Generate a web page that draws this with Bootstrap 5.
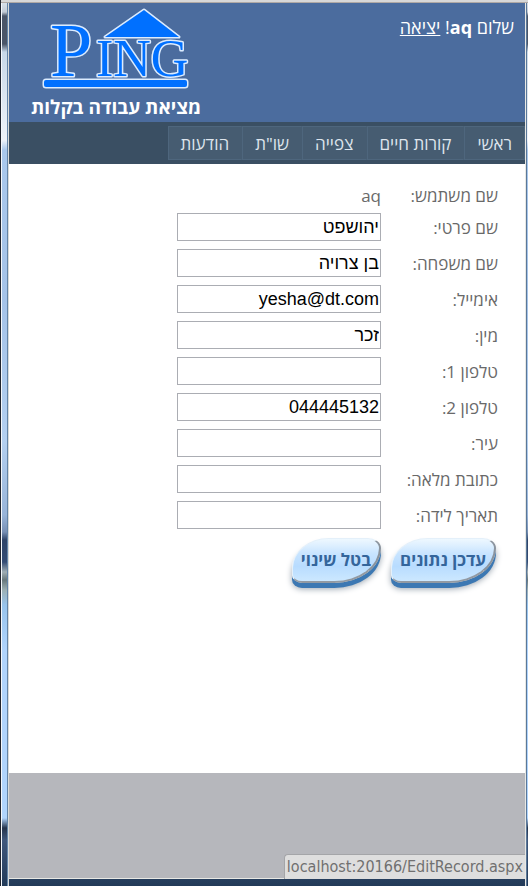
<!DOCTYPE html>
<html lang="he" dir="rtl">
<head>
<meta charset="utf-8">
<meta name="viewport" content="width=device-width, initial-scale=1">
<title>PING</title>
<link href="https://cdn.jsdelivr.net/npm/bootstrap@5.3.0/dist/css/bootstrap.min.css" rel="stylesheet">
<style>
body{font-family:"Open Sans","DejaVu Sans",sans-serif;font-size:17px;line-height:24px;color:#696969;background:#fff}
.glass{padding:3px 3px 7px 8px;border-left:1px solid #20242e;
 background:linear-gradient(#d8d8d8 0 2px,#b0a9a5 2px 3px,transparent 3px),
 linear-gradient(to right,#f4f8fc 0 1px,transparent 1px 6px,#6484a6 6px 7px,#d8dad8 7px 8px,transparent 8px calc(100% - 3px),#e8e8e4 calc(100% - 3px) calc(100% - 2px),#5b7899 calc(100% - 2px) calc(100% - 1px),transparent calc(100% - 1px)),
 linear-gradient(#dce6f0 0,#c4ccd6 12px,#4a5568 16px,#4a5568 44px,#c8d8e8 52px,#eef3f9 140px,#a9c8ec 150px,#a5c3e8 300px,#b4d0f0 440px,#98b4d8 515px,#7890b4 532px,#2e4468 540px,#344c74 562px,#a0aeb4 572px,#68787c 580px,#9cb0b4 590px,#98c4ec 605px,#b0d4fc 650px,#b0d4fc 818px,#25344c 828px,#40587c 840px,#223a58 100%)}
.masthead{background:#4b6c9e;color:#fff;height:119px;padding:4px 11px 0 22px}
.brand-logo{width:146px;height:86px;overflow:visible}
.tagline{font-size:19px;line-height:28px;font-weight:700}
.hello{padding-top:8px;font-size:18px}
.menu-bar{background:#3a4f63;padding:4px 0}
.menu-bar a{color:#dde4ec;background:#465c71;border:1px solid #4e667d;padding:5px 12px 3px;line-height:24px;font-size:17px}
.menu-bar li+li a{border-right-color:#465c71}
.sheet{padding:18px 27px 24px}
.field-row{min-height:28px;margin-bottom:8px}
.field-row.first{margin-bottom:3px}
.field-row label,.field-name{width:117px;line-height:30px}
.field-row.first>*{line-height:28px}
.field-row input{width:204px;height:28px;border:1px solid #abadb3;border-radius:0;padding:0 1px;color:#000;font:18px/24px "Liberation Sans",Arial,sans-serif}
.field-row label{height:28px}
.pill{height:45px;padding:0 8px;font-size:17px;font-weight:700;color:#34659b;border:1px solid #e4f0fa;border-right:2px solid #8b949e;border-bottom:2px solid #929aa3;border-radius:44px 16px 56px 12px/36px 12px 42px 10px;background:linear-gradient(#eef8ff,#c8e4ff 35%,#b8dcff 65%,#cce8ff);box-shadow:0 5px 0 #3c78b3,0 6px 6px #9aa5b0}
.pill-row{gap:10px;padding:1px 2px 0 0}
.foot{background:#b6b7bc;height:106px;border-bottom:1px solid #e8e8e4}
.status{right:0;bottom:0;background:#dedede;border:1px solid #a4a5a8;border-right:0;border-bottom:0;border-radius:4px 0 0 0;line-height:24px;padding:0 2px;font-family:"DejaVu Sans Condensed","DejaVu Sans",sans-serif;font-size:16px;color:#707070}
</style>
<script src="https://cdn.jsdelivr.net/npm/bootstrap@5.3.0/dist/js/bootstrap.bundle.min.js"></script>
</head>
<body>
<div class="glass min-vh-100 d-flex flex-column">
 <div class="position-relative flex-grow-1 d-flex flex-column bg-white">
  <header class="masthead d-flex justify-content-between">
   <div class="hello">שלום <strong>aq</strong>! <a href="#" class="text-white text-decoration-underline">יציאה</a></div>
   <div class="d-flex flex-column align-items-center">
    <svg class="brand-logo" viewBox="0 0 146 86" direction="ltr" role="img" aria-label="PING">
     <g fill="#0070ff" stroke="#dcecff" stroke-width="3" stroke-linejoin="round" paint-order="stroke" font-family="Liberation Serif, serif">
      <path d="M101 3 136 30H62Z"/>
      <rect x="1" y="73" width="143" height="7" rx="2"/>
      <text x="7" y="69" font-size="76" font-weight="400">P</text>
      <text x="53" y="69" font-size="52">ING</text>
     </g>
    </svg>
    <div class="tagline">מציאת עבודה בקלות</div>
   </div>
  </header>
  <nav class="menu-bar">
   <ul class="list-unstyled d-flex m-0 p-0">
    <li><a class="d-block text-decoration-none" href="#">ראשי</a></li>
    <li><a class="d-block text-decoration-none" href="#">קורות חיים</a></li>
    <li><a class="d-block text-decoration-none" href="#">צפייה</a></li>
    <li><a class="d-block text-decoration-none" href="#">שו"ת</a></li>
    <li><a class="d-block text-decoration-none" href="#">הודעות</a></li>
   </ul>
  </nav>
  <main class="sheet flex-grow-1">
   <form>
    <div class="field-row first d-flex"><span class="field-name">שם משתמש:</span><span>aq</span></div>
    <div class="field-row d-flex"><label for="f1">שם פרטי:</label><input id="f1" type="text" value="יהושפט"></div>
    <div class="field-row d-flex"><label for="f2">שם משפחה:</label><input id="f2" type="text" value="בן צרויה"></div>
    <div class="field-row d-flex"><label for="f3">אימייל:</label><input id="f3" type="text" value="yesha@dt.com"></div>
    <div class="field-row d-flex"><label for="f4">מין:</label><input id="f4" type="text" value="זכר"></div>
    <div class="field-row d-flex"><label for="f5">טלפון 1:</label><input id="f5" type="text"></div>
    <div class="field-row d-flex"><label for="f6">טלפון 2:</label><input id="f6" type="text" value="044445132"></div>
    <div class="field-row d-flex"><label for="f7">עיר:</label><input id="f7" type="text"></div>
    <div class="field-row d-flex"><label for="f8">כתובת מלאה:</label><input id="f8" type="text"></div>
    <div class="field-row d-flex"><label for="f9">תאריך לידה:</label><input id="f9" type="text"></div>
    <div class="pill-row d-flex"><button type="button" class="pill">עדכן נתונים</button><button type="button" class="pill">בטל שינוי</button></div>
   </form>
  </main>
  <footer class="foot"></footer>
  <div class="status position-absolute" dir="ltr">localhost:20166/EditRecord.aspx</div>
 </div>
</div>
</body>
</html>
